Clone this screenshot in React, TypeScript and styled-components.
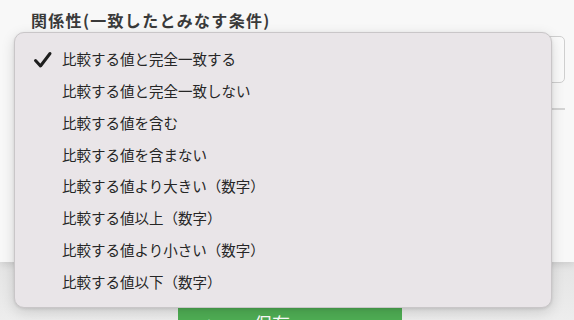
import React from "react";
import styled, { createGlobalStyle } from "styled-components";

const Global = createGlobalStyle`
  html, body { margin: 0; padding: 0; }
  body {
    width: 574px;
    height: 320px;
    overflow: hidden;
    background: #e9e9e9;
    font-family: "Noto Sans CJK JP", "Noto Sans", sans-serif;
  }
`;

const Page = styled.div`
  position: relative;
  width: 574px;
  height: 320px;
  display: flex;
  flex-direction: column;
  overflow: hidden;
`;

const Panel = styled.div`
  height: 262px;
  flex-shrink: 0;
  background: #f8f8f8;
  box-shadow: 0 2px 8px rgba(0, 0, 0, 0.12);
  padding: 8px 9px 0 31px;
  box-sizing: border-box;
  display: flex;
  flex-direction: column;
  position: relative;
  z-index: 1;
`;

const Label = styled.div`
  font-size: 16px;
  font-weight: 700;
  letter-spacing: 1.3px;
  color: #3a3a3a;
  line-height: 24px;
`;

const SelectBox = styled.div`
  margin-top: 4px;
  height: 47px;
  border: 1px solid #cfcfcf;
  border-radius: 5px;
  background: #fafafa;
  box-sizing: border-box;
`;

const Divider = styled.div`
  margin-top: 25px;
  height: 2px;
  background: #d4d4d4;
`;

const Footer = styled.div`
  flex: 1;
  min-height: 0;
  display: flex;
  padding: 46px 0 0 178px;
  background: linear-gradient(#e4e4e4, #ededed);
  overflow: hidden;
`;

const SaveButton = styled.div`
  width: 224px;
  height: 48px;
  background: #4fae54;
  color: #fff;
  font-size: 18px;
  line-height: 24px;
  display: flex;
  align-items: flex-start;
  padding: 3px 0 0 26px;
  box-sizing: border-box;
  gap: 40px;
  flex-shrink: 0;
`;

const Menu = styled.div`
  position: absolute;
  left: 14px;
  top: 32px;
  width: 538px;
  height: 276px;
  box-sizing: border-box;
  padding: 10px 0;
  background: #e9e5e8;
  border: 1px solid #c9c6c8;
  border-radius: 10px;
  box-shadow: 0 4px 14px rgba(0, 0, 0, 0.14), 0 1px 3px rgba(0, 0, 0, 0.1);
  z-index: 2;
  display: flex;
  flex-direction: column;
`;

const Item = styled.div`
  height: 32px;
  display: flex;
  align-items: center;
  font-size: 14.5px;
  color: #262626;
  position: relative;
  padding-left: 47px;
`;

const Check = styled.svg`
  position: absolute;
  left: 18px;
  top: 8px;
`;

const items = [
  "比較する値と完全一致する",
  "比較する値と完全一致しない",
  "比較する値を含む",
  "比較する値を含まない",
  "比較する値より大きい（数字）",
  "比較する値以上（数字）",
  "比較する値より小さい（数字）",
  "比較する値以下（数字）",
];

export default function App() {
  return (
    <>
      <Global />
      <Page>
        <Panel>
          <Label>関係性(一致したとみなす条件)</Label>
          <SelectBox />
          <Divider />
        </Panel>
        <Footer>
          <SaveButton>
            <span>+</span>
            <span>保存</span>
          </SaveButton>
        </Footer>
        <Menu>
          {items.map((t, i) => (
            <Item key={t}>
              {i === 0 && (
                <Check width="20" height="18" viewBox="0 0 20 18">
                  <path
                    d="M2.5 9.5 L7.5 15 L17 2.5"
                    fill="none"
                    stroke="#1e1e1e"
                    strokeWidth="3"
                    strokeLinecap="round"
                    strokeLinejoin="round"
                  />
                </Check>
              )}
              {t}
            </Item>
          ))}
        </Menu>
      </Page>
    </>
  );
}
